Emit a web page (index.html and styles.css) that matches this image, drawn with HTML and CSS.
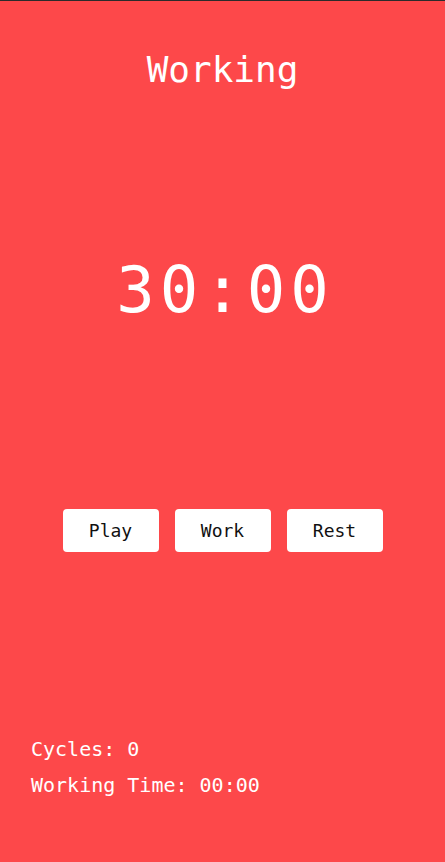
FILE: index.html
```html
<!DOCTYPE html>
<html lang="en">
<head>
<meta charset="utf-8">
<title>Pomodoro</title>
<link rel="stylesheet" href="styles.css">
</head>
<body>
<main class="app">
  <h1 class="mode">Working</h1>
  <div class="timer">30:00</div>
  <div class="controls">
    <button class="btn">Play</button>
    <button class="btn">Work</button>
    <button class="btn">Rest</button>
  </div>
  <div class="stats">
    <p class="stat">Cycles: 0</p>
    <p class="stat">Working Time: 00:00</p>
  </div>
</main>
</body>
</html>
```
FILE: styles.css
```css
html, body {
  margin: 0;
  padding: 0;
}
body {
  background: #fd484a;
  border-top: 1px solid #2b2b2b;
  min-height: 861px;
  font-family: "DejaVu Sans Mono", "Liberation Mono", monospace;
  color: #ffffff;
}
.app {
  display: flex;
  flex-direction: column;
}
.mode {
  margin: 51px 0 0;
  font-size: 36px;
  line-height: 36px;
  font-weight: normal;
  text-align: center;
}
.timer {
  margin-top: 170px;
  font-size: 64px;
  line-height: 64px;
  letter-spacing: 5px;
  text-align: center;
  padding-left: 5px;
}
.controls {
  margin-top: 187px;
  display: flex;
  justify-content: center;
  gap: 16px;
}
.btn {
  width: 96px;
  height: 43px;
  border: none;
  border-radius: 4px;
  background: #ffffff;
  color: #111111;
  font-family: "DejaVu Sans Mono", "Liberation Mono", monospace;
  font-size: 18px;
  padding: 0;
}
.stats {
  margin-top: 179px;
  padding-left: 31px;
}
.stat {
  margin: 0;
  font-size: 20px;
  line-height: 36px;
}
```
